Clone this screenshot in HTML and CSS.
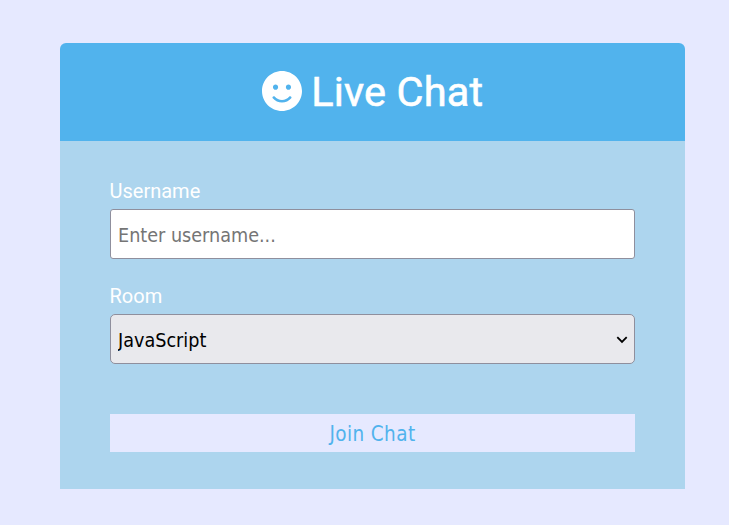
FILE: index.html
```html
<!DOCTYPE html>
<html lang="en">
<head>
<meta charset="UTF-8">
<title>Live Chat</title>
<link rel="stylesheet" href="styles.css">
</head>
<body>
<div class="join-container">
  <header class="join-header">
    <h1 class="title">
      <svg class="smile" viewBox="0 0 496 496" aria-hidden="true"><path fill="currentColor" fill-rule="evenodd" d="M248 0C111 0 0 111 0 248s111 248 248 248 248-111 248-248S385 0 248 0zm80 168c17.700 0 32 14.300 32 32s-14.300 32-32 32-32-14.300-32-32 14.300-32 32-32zm-160 0c17.700 0 32 14.300 32 32s-14.300 32-32 32-32-14.300-32-32 14.300-32 32-32zm194.800 170.200C334.300 372.400 292.500 392 248 392s-86.300-19.600-114.800-53.800c-13.600-16.300 11-36.700 24.600-20.500 22.400 26.900 55.200 42.200 90.200 42.200s67.800-15.400 90.200-42.200c13.400-16.200 38.100 4.200 24.600 20.500z"/></svg>
      <span class="title-text">Live Chat</span>
    </h1>
  </header>
  <main class="join-main">
    <form>
      <div class="form-control">
        <label for="username">Username</label>
        <input class="field" type="text" id="username" placeholder="Enter username...">
      </div>
      <div class="form-control">
        <label for="room">Room</label>
        <div class="select-wrap">
          <select class="field" id="room"><option>JavaScript</option></select>
          <svg class="chevron" viewBox="0 0 12 8" aria-hidden="true"><path d="M1.300 1.200 6 6l4.700-4.800" fill="none" stroke="#000" stroke-width="1.800"/></svg>
        </div>
      </div>
      <button class="btn" type="submit">Join Chat</button>
    </form>
  </main>
</div>
</body>
</html>
```
FILE: styles.css
```css
* {
  box-sizing: border-box;
  margin: 0;
  padding: 0;
}

body {
  background: #e6e9ff;
  font-family: Roboto, sans-serif;
  font-size: 20px;
}

.join-container {
  width: 625px;
  margin: 43px 0 0 60px;
  color: #fff;
}

.join-header {
  height: 98px;
  background: #51b3ed;
  border-radius: 6px 6px 0 0;
  display: flex;
  align-items: center;
  justify-content: center;
}

.title {
  display: flex;
  align-items: center;
  gap: 9.500px;
  font-size: 41.500px;
  font-weight: 400;
  letter-spacing: 0.180px;
  line-height: 48px;
  -webkit-text-stroke: 0.600px #fff;
}

.smile {
  width: 40px;
  height: 40px;
  margin-top: -2px;
}

.join-main {
  height: 348px;
  padding: 38px 50px 0;
  background: #add5ee;
}

.form-control {
  margin-bottom: 25px;
}

label {
  display: block;
  height: 24px;
  line-height: 24px;
  margin-bottom: 6px;
  margin-left: -0.500px;
}

.field {
  display: block;
  width: 100%;
  height: 50px;
  padding: 2px 7px 0;
  border: 1px solid #8f8f9d;
  border-radius: 3px;
  background: #fff;
  color: #000;
  font-family: "DejaVu Sans Condensed", "DejaVu Sans", sans-serif;
  font-stretch: condensed;
  font-size: 19.600px;
}

.field::placeholder {
  color: #757575;
}

.select-wrap {
  position: relative;
}

select.field {
  appearance: none;
  background: #e9e9ed;
  border-radius: 5px;
}

.chevron {
  position: absolute;
  right: 7px;
  top: 22px;
  width: 12px;
  height: 8px;
}

.btn {
  display: block;
  width: 100%;
  height: 38px;
  margin-top: 50px;
  padding-top: 2px;
  border: 0;
  background: #e6e9ff;
  color: #51b3ed;
  font-family: "DejaVu Sans Condensed", "DejaVu Sans", sans-serif;
  font-stretch: condensed;
  font-size: 20.500px;
  letter-spacing: 0.400px;
}
```
